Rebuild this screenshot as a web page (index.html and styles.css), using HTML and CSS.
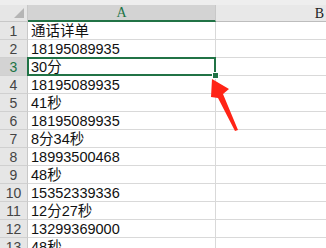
FILE: index.html
```html
<!DOCTYPE html>
<html lang="zh-CN">
<head>
    <meta charset="UTF-8">
    <title>通话详单</title>
    <link rel="stylesheet" href="styles.css">
</head>
<body>
    <div class="topbar"></div>

    <div class="sheet">
        <!-- Spaltenköpfe -->
        <div class="corner"><span class="corner-tri"></span></div>
        <div class="colhead active">A</div>
        <div class="colhead">B</div>

        <div class="rowhead">1</div><div class="cell">通话详单</div><div class="cell blank"></div>
        <div class="rowhead">2</div><div class="cell">18195089935</div><div class="cell blank"></div>
        <div class="rowhead active">3</div><div class="cell selected">30分<span class="handle"></span></div><div class="cell blank"></div>
        <div class="rowhead">4</div><div class="cell">18195089935</div><div class="cell blank"></div>
        <div class="rowhead">5</div><div class="cell">41秒</div><div class="cell blank"></div>
        <div class="rowhead">6</div><div class="cell">18195089935</div><div class="cell blank"></div>
        <div class="rowhead">7</div><div class="cell">8分34秒</div><div class="cell blank"></div>
        <div class="rowhead">8</div><div class="cell">18993500468</div><div class="cell blank"></div>
        <div class="rowhead">9</div><div class="cell">48秒</div><div class="cell blank"></div>
        <div class="rowhead">10</div><div class="cell">15352339336</div><div class="cell blank"></div>
        <div class="rowhead">11</div><div class="cell">12分27秒</div><div class="cell blank"></div>
        <div class="rowhead">12</div><div class="cell">13299369000</div><div class="cell blank"></div>
        <div class="rowhead">13</div><div class="cell">48秒</div><div class="cell blank"></div>
    </div>

    <!-- roter Pfeil auf den Ausfüllpunkt -->
    <svg class="arrow" width="326" height="248" viewBox="0 0 326 248">
        <polygon points="212,79 229,89 223,94 238,130 235,131 218,98 211,97" fill="#ff2416"/>
    </svg>
</body>
</html>
```

FILE: styles.css
```css
body {
    margin: 0;
    width: 326px;
    height: 248px;
    overflow: hidden;
    position: relative;
    background: #ffffff;
    font-family: "Liberation Sans", "Noto Sans CJK SC", sans-serif;
}

.topbar {
    height: 5px;
    background: #eeeeee;
}

.sheet {
    display: grid;
    grid-template-columns: 28px 188px 208px;
    grid-auto-rows: 18px;
    grid-template-rows: 17px;
}

.corner {
    background: #e6e6e6;
    border-right: 1px solid #c8c8c8;
    border-bottom: 1px solid #c8c8c8;
    position: relative;
}

.corner-tri {
    position: absolute;
    right: 3px;
    bottom: 3px;
    width: 0;
    height: 0;
    border-left: 10px solid transparent;
    border-bottom: 10px solid #b5b5b5;
}

.colhead {
    background: #e8e8e8;
    border-right: 1px solid #c8c8c8;
    border-bottom: 1px solid #bdbdbd;
    font-family: "Liberation Serif", serif;
    font-size: 14px;
    line-height: 17px;
    text-align: center;
    color: #222;
}

.colhead.active {
    background: #d3d3d3;
    border-bottom: 2px solid #217346;
    color: #217346;
    line-height: 16px;
}

.rowhead {
    background: #e6e6e6;
    border-right: 1px solid #c8c8c8;
    border-bottom: 1px solid #d0d0d0;
    font-size: 14px;
    line-height: 19px;
    text-align: center;
    color: #444;
}

.rowhead.active {
    background: #d3d3d3;
    color: #217346;
}

.cell {
    border-right: 1px solid #d9d9d9;
    border-bottom: 1px solid #d9d9d9;
    padding-left: 3px;
    font-size: 14.5px;
    line-height: 19px;
    color: #111;
    white-space: nowrap;
    overflow: hidden;
}

.cell.selected {
    position: relative;
    overflow: visible;
}

.cell.selected::after {
    content: "";
    position: absolute;
    left: -1px;
    top: -1px;
    right: -1px;
    bottom: -1px;
    border: 2px solid #217346;
}

.handle {
    position: absolute;
    right: -4px;
    bottom: -4px;
    width: 5px;
    height: 5px;
    background: #217346;
    border: 1px solid #ffffff;
    z-index: 2;
}

.arrow {
    position: absolute;
    left: 0;
    top: 0;
    pointer-events: none;
}
```
